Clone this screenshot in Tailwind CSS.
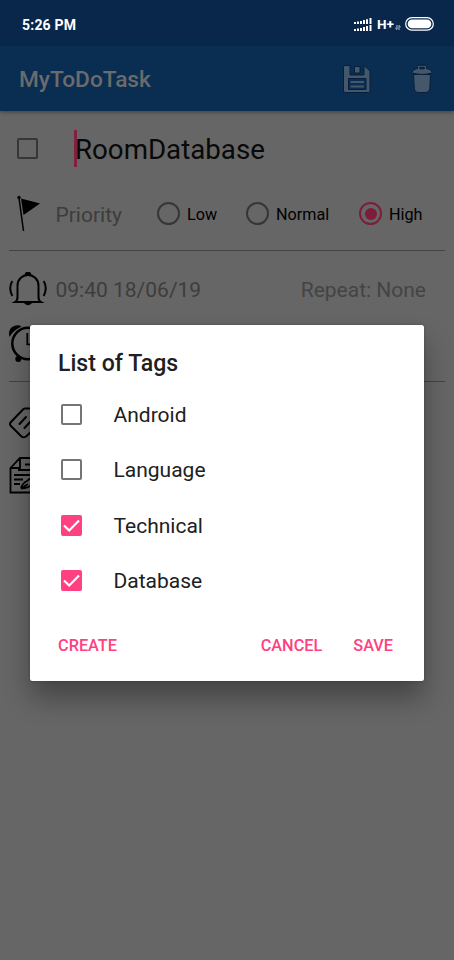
<!DOCTYPE html>
<html lang="en">
<head>
<meta charset="utf-8">
<title>MyToDoTask</title>
<script src="https://cdn.jsdelivr.net/npm/@tailwindcss/browser@4"></script>
</head>
<body class="relative h-[960px] w-[454px] overflow-hidden bg-[#666666] font-[Roboto,sans-serif] text-black">
  <header class="relative shadow-[0_1px_4px_rgba(0,0,0,0.4)]">
    <div class="flex h-[46px] items-center justify-between bg-[#09264b] pt-[3px] pr-[20px] pl-[22px] text-white">
      <span class="text-[14px] leading-none font-bold tracking-[0.2px]">5:26 PM</span>
      <div class="flex items-center">
        <svg class="mr-[5px] h-[14px] w-[18px]" viewBox="0 0 18 14" fill="#fff">
          <path d="M0 4h2v2H0zM3 3.500h2V6H3zM6 3h2v3H6zM9 2h2v4H9zM12 1.200h2V6h-2zM15.500 0h2v6h-2zM0 11h2v2H0zM3 10.500h2V13H3zM6 10h2v3H6zM9 9h2v4H9zM12 8h2v5h-2zM15.500 7h2v6h-2z"/>
        </svg>
        <span class="w-[18px] text-[13.5px] leading-none font-bold">H+</span>
        <svg class="mr-[4px] mt-[6px] h-[5px] w-[6px]" viewBox="0 0 6 5" fill="none" stroke="#c8d0da" stroke-width=".9"><path d="M2 0v4.500L.3 3M4 5V.500L5.700 2"/></svg>
        <svg class="-mt-[1px] h-[14px] w-[29px]" viewBox="0 0 29 14"><rect x=".7" y=".7" width="27.600" height="12.400" rx="6.200" fill="none" stroke="#fff" stroke-width="1.200"/><rect x="2.700" y="2.600" width="23.600" height="8.600" rx="4.300" fill="#fff"/></svg>
      </div>
    </div>
    <div class="flex h-[65px] items-center bg-[#0a2d52] pr-[20px] pl-[19px]">
      <h1 class="mt-[4px] grow text-[22.700px] leading-none font-medium text-[#6b6b6b]">MyToDoTask</h1>
      <svg class="mr-[38px] h-[30px] w-[30px]" viewBox="0 0 30 30" fill="#45586b" stroke="#071f3b" stroke-width="1" stroke-linejoin="round">
        <path fill-rule="evenodd" d="M3 1.500H8V11H22V1.500L28 7V27q0 1.500-1.500 1.500H3Q1.500 28.500 1.500 27V3Q1.500 1.500 3 1.500zM6.500 14.500V25.500H24V14.500z"/>
        <path d="M12.500 2.500H18V9H12.500z"/>
        <path d="M8.500 17H22V19H8.500zM8.500 21.500H22V23.500H8.500z" stroke="none"/>
      </svg>
      <svg class="h-[30px] w-[24px]" viewBox="0 0 24 30" fill="#45586b" stroke="#071f3b" stroke-width="1" stroke-linejoin="round">
        <path d="M3.500 10.500H20.500L19.800 25Q19 28.500 16 28.500H8Q5 28.500 4.300 25z"/>
        <path fill-rule="evenodd" d="M7.500 4.500V2.500Q7.500 1.200 9 1.200H15Q16.500 1.200 16.500 2.500V4.500Q21 4.800 22.500 8.800Q12 12 1.500 8.800Q3 4.800 7.500 4.500zM9.700 4.800H14.300V3.300H9.700z"/>
      </svg>
    </div>
  </header>

  <main class="flex flex-col px-[9px]">
    <div class="flex h-[78px] items-center pl-[8px]">
      <span class="mt-[-3px] h-[21px] w-[21px] rounded-[2px] border-2 border-[#363636]"></span>
      <span class="ml-[36px] mt-[-4px] h-[37px] w-[2.500px] bg-[#82203f]"></span>
      <span class="-ml-[1.500px] text-[27.7px] leading-none text-[#090909]">RoomDatabase</span>
    </div>
    <div class="flex h-[50px] items-center">
      <svg class="-mt-[2px] ml-[8px] h-[37px] w-[24px]" viewBox="0 0 24 37"><circle cx="2" cy="2.500" r="1.700"/><path d="M2 3L6.500 36" stroke="#000" stroke-width="1.500"/><path d="M4 3.500L23 8.500L6.500 20z"/></svg>
      <span class="mt-[2px] ml-[14.5px] w-[101.5px] text-[21px] leading-none text-[#3d3d3d]">Priority</span>
      <span class="-mt-[1px] h-[23px] w-[23px] rounded-full border-2 border-[#363636]"></span>
      <span class="mt-[2px] ml-[7px] w-[59px] text-[16.2px] leading-none">Low</span>
      <span class="-mt-[1px] h-[23px] w-[23px] rounded-full border-2 border-[#363636]"></span>
      <span class="mt-[2px] ml-[7px] w-[83px] text-[16.2px] leading-none">Normal</span>
      <span class="-mt-[1px] flex h-[23px] w-[23px] items-center justify-center rounded-full border-2 border-[#7c1d3c]"><i class="h-[12px] w-[12px] rounded-full bg-[#7c1d3c]"></i></span>
      <span class="mt-[2px] ml-[7px] text-[16.2px] leading-none">High</span>
    </div>
    <div class="mt-[11px] h-px bg-[#444444]"></div>
    <div class="flex h-[77px] items-center">
      <svg class="-mt-[2px] h-[34px] w-[38px]" viewBox="0 0 38 34" fill="none" stroke="#000" stroke-width="2"><path d="M6 30H32Q29.500 28.500 29.500 25V13.500A10.500 10.500 0 0 0 8.500 13.500V25Q8.500 28.500 6 30zM3.300 9Q-.8 16 3.300 24M34.700 9Q38.800 16 34.700 24"/><path d="M16 3a3 3 0 0 1 6 0zM15.500 31h7q-3.500 3.500-7 0z" fill="#000" stroke-width="1"/></svg>
      <span class="mt-[1px] ml-[8.5px] grow text-[21px] leading-none text-[#3d3d3d]">09:40 18/06/19</span>
      <span class="mt-[1px] mr-[19px] text-[21px] leading-none text-[#444444]">Repeat: None</span>
    </div>
    <svg class="-mt-[3px] h-[38px] w-[38px]" viewBox="0 0 38 38" fill="none" stroke="#000" stroke-width="2.500"><circle cx="19" cy="18.500" r="15.700"/><path d="M18.300 8V19.300H25" stroke-width="1.800"/><path d="M.5 12Q-1.500 4 5 1Q10-.5 12.500 1.500Q4.500 5 .5 12zM37.500 12Q39.500 4 33 1Q28-.5 25.500 1.500Q33.500 5 37.500 12z" fill="#000" stroke="none"/><circle cx="9.300" cy="34" r="3" fill="#000" stroke="none"/><circle cx="28.700" cy="34" r="3" fill="#000" stroke="none"/></svg>
    <div class="mt-[18px] h-px bg-[#444444]"></div>
    <svg class="mt-[25px] h-[32px] w-[38px]" viewBox="0 0 38 32" fill="none" stroke="#000" stroke-width="2" stroke-linejoin="round"><path d="M16 1.500H34V14L17 29.500Q14.500 31 12.500 29.500L1.500 18.500Q.5 17 1.500 15.500L13.500 3Q14.500 1.500 16 1.500zM10.500 17L17 10M15.500 21L23 13" stroke-linecap="round"/></svg>
    <svg class="mt-[18px] h-[38px] w-[38px]" viewBox="0 0 38 38" fill="none" stroke="#000" stroke-width="1.800"><path d="M1.500 11L11 1H34V35.500H1.500zM11 1V11H1.500M16 7.500H28M9 13H28M5 18H28M5 22.500H14M5 27H11M12 31.500Q13 26.500 18 24L28 16M12 31.500Q20 31.500 24 26M12 31.500L19 27"/></svg>
  </main>

  <section role="dialog" class="absolute top-[325px] left-[30px] flex h-[356px] w-[394px] flex-col rounded-[2.500px] bg-white pr-[31px] pl-[28px] shadow-[0_17px_28px_rgba(0,0,0,0.33),0_0_3px_rgba(0,0,0,0.25)]">
    <h2 class="mt-[27px] mb-[11.500px] text-[23.1px] leading-[23px] font-medium text-[#202020]">List of Tags</h2>
    <label class="flex h-[55.500px] items-center pl-[3px] text-[21px] leading-none text-[#202020]"><span class="mr-[31.500px] h-[21px] w-[21px] rounded-[2px] border-2 border-[#757575]"></span><span class="mt-[2px]">Android</span></label>
    <label class="flex h-[55.500px] items-center pl-[3px] text-[21px] leading-none text-[#202020]"><span class="mr-[31.500px] h-[21px] w-[21px] rounded-[2px] border-2 border-[#757575]"></span><span class="mt-[2px]">Language</span></label>
    <label class="flex h-[55.500px] items-center pl-[3px] text-[21px] leading-none text-[#202020]"><svg class="mr-[31.500px] h-[21px] w-[21px]" viewBox="0 0 21 21"><rect width="21" height="21" rx="2" fill="#ff4081"/><path d="M3 10.500L8.200 15.500L18 5.500" fill="none" stroke="#fff" stroke-width="2.200"/></svg><span class="mt-[2px]">Technical</span></label>
    <label class="flex h-[55.500px] items-center pl-[3px] text-[21px] leading-none text-[#202020]"><svg class="mr-[31.500px] h-[21px] w-[21px]" viewBox="0 0 21 21"><rect width="21" height="21" rx="2" fill="#ff4081"/><path d="M3 10.500L8.200 15.500L18 5.500" fill="none" stroke="#fff" stroke-width="2.200"/></svg><span class="mt-[2px]">Database</span></label>
    <div class="mt-[27.500px] flex text-[16.3px] leading-[20px] font-medium text-[#ff4081]">
      <span class="grow">CREATE</span><span class="mr-[31px]">CANCEL</span><span>SAVE</span>
    </div>
  </section>
</body>
</html>
